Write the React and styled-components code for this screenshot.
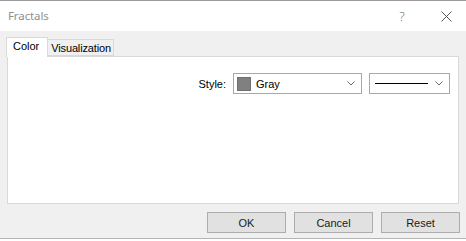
import React from 'react';
import styled, { createGlobalStyle } from 'styled-components';

const Global = createGlobalStyle`
  html, body { margin: 0; padding: 0; background: #ffffff; }
  body { font-family: "Liberation Sans", Arial, sans-serif; }
`;

const Screen = styled.div`
  width: 466px;
  height: 241px;
  overflow: hidden;
  background: #ffffff;
`;

const Dialog = styled.div`
  display: flex;
  flex-direction: column;
  height: 239px;
  box-sizing: border-box;
  border-top: 1px solid #9a9a9a;
  border-bottom: 1px solid #b4b4b4;
`;

const TitleBar = styled.div`
  height: 30px;
  display: flex;
  align-items: center;
  background: #ffffff;
  padding-left: 8px;
`;

const Title = styled.div`
  flex: 1;
  font-family: "Noto Sans", "Open Sans", sans-serif;
  font-size: 11.5px;
  color: #8f8f8f;
  letter-spacing: -0.1px;
  padding-bottom: 1px;
`;

const TitleButton = styled.div`
  width: ${({ w }) => w}px;
  height: 30px;
  display: flex;
  align-items: center;
  justify-content: center;
  color: #777;
  font-family: "Noto Sans", sans-serif;
  font-size: 13px;
  font-weight: 300;
`;

const Body = styled.div`
  flex: 1;
  display: flex;
  flex-direction: column;
  background: #f0f0f0;
  padding: 6px 6px 5px 7px;
`;

const TabRow = styled.div`
  display: flex;
  align-items: flex-end;
  height: 19px;
  position: relative;
  z-index: 1;
`;

const Tab = styled.div`
  box-sizing: border-box;
  height: ${({ active }) => (active ? 20 : 17)}px;
  margin-bottom: ${({ active }) => (active ? -1 : 0)}px;
  margin-left: ${({ active }) => (active ? -1 : 0)}px;
  padding: ${({ active }) => (active ? '2px 8px 0 6px' : '2px 2px 0 3px')};
  background: ${({ active }) => (active ? '#ffffff' : '#f0f0f0')};
  border: 1px solid #d9d9d9;
  border-bottom: ${({ active }) => (active ? 'none' : '1px solid #d9d9d9')};
  border-left: ${({ active }) => (active ? '1px solid #d9d9d9' : 'none')};
  font-size: 11px;
  letter-spacing: ${({ active }) => (active ? 0 : -0.15)}px;
  color: #000;
  line-height: 13px;
`;

const Panel = styled.div`
  height: 148px;
  box-sizing: border-box;
  margin-right: 1px;
  background: #ffffff;
  border: 1px solid #d9d9d9;
  padding: 16px 8px 0 0;
`;

const Row = styled.div`
  display: flex;
  justify-content: flex-end;
  align-items: center;
  gap: 7px;
`;

const Label = styled.div`
  font-size: 11px;
  color: #000;
`;

const Select = styled.div`
  box-sizing: border-box;
  width: ${({ w }) => w}px;
  height: 21px;
  display: flex;
  align-items: center;
  border: 1px solid #a9a9a9;
  background: #ffffff;
  padding: 0 6px 0 3px;
  gap: 5px;
  font-size: 11px;
  color: #000;
`;

const Swatch = styled.div`
  width: 14px;
  height: 14px;
  box-sizing: border-box;
  background: #808080;
  border: 1px solid #6f6f6f;
`;

const Grow = styled.div`
  flex: 1;
  display: flex;
  align-items: center;
`;

const LineSample = styled.div`
  width: 53px;
  height: 1px;
  margin-left: 2px;
  background: #000;
`;

const Buttons = styled.div`
  display: flex;
  justify-content: flex-end;
  gap: 8px;
  margin-top: 8px;
`;

const Button = styled.div`
  box-sizing: border-box;
  width: 79px;
  height: 21px;
  display: flex;
  align-items: center;
  justify-content: center;
  background: #e1e1e1;
  border: 1px solid #adadad;
  font-size: 11px;
  color: #1a1a1a;
`;

const Chevron = () => (
  <svg width="8" height="5" viewBox="0 0 8 5">
    <path d="M0.5 0.5 L4 4 L7.5 0.5" fill="none" stroke="#6a6a6a" strokeWidth="1" />
  </svg>
);

const CloseIcon = () => (
  <svg width="11" height="11" viewBox="0 0 11 11">
    <path d="M0.5 0.5 L10.5 10.5 M10.5 0.5 L0.5 10.5" stroke="#555" strokeWidth="1" />
  </svg>
);

export default function App() {
  return (
    <Screen>
      <Global />
      <Dialog>
        <TitleBar>
          <Title>Fractals</Title>
          <TitleButton w={20}>?</TitleButton>
          <TitleButton w={26} />
          <TitleButton w={16}>
            <CloseIcon />
          </TitleButton>
          <TitleButton w={12} />
        </TitleBar>
        <Body>
          <TabRow>
            <Tab active>Color</Tab>
            <Tab>Visualization</Tab>
          </TabRow>
          <Panel>
            <Row>
              <Label>Style:</Label>
              <Select w={129}>
                <Swatch />
                <Grow>Gray</Grow>
                <Chevron />
              </Select>
              <Select w={81}>
                <Grow>
                  <LineSample />
                </Grow>
                <Chevron />
              </Select>
            </Row>
          </Panel>
          <Buttons>
            <Button>OK</Button>
            <Button>Cancel</Button>
            <Button>Reset</Button>
          </Buttons>
        </Body>
      </Dialog>
    </Screen>
  );
}
